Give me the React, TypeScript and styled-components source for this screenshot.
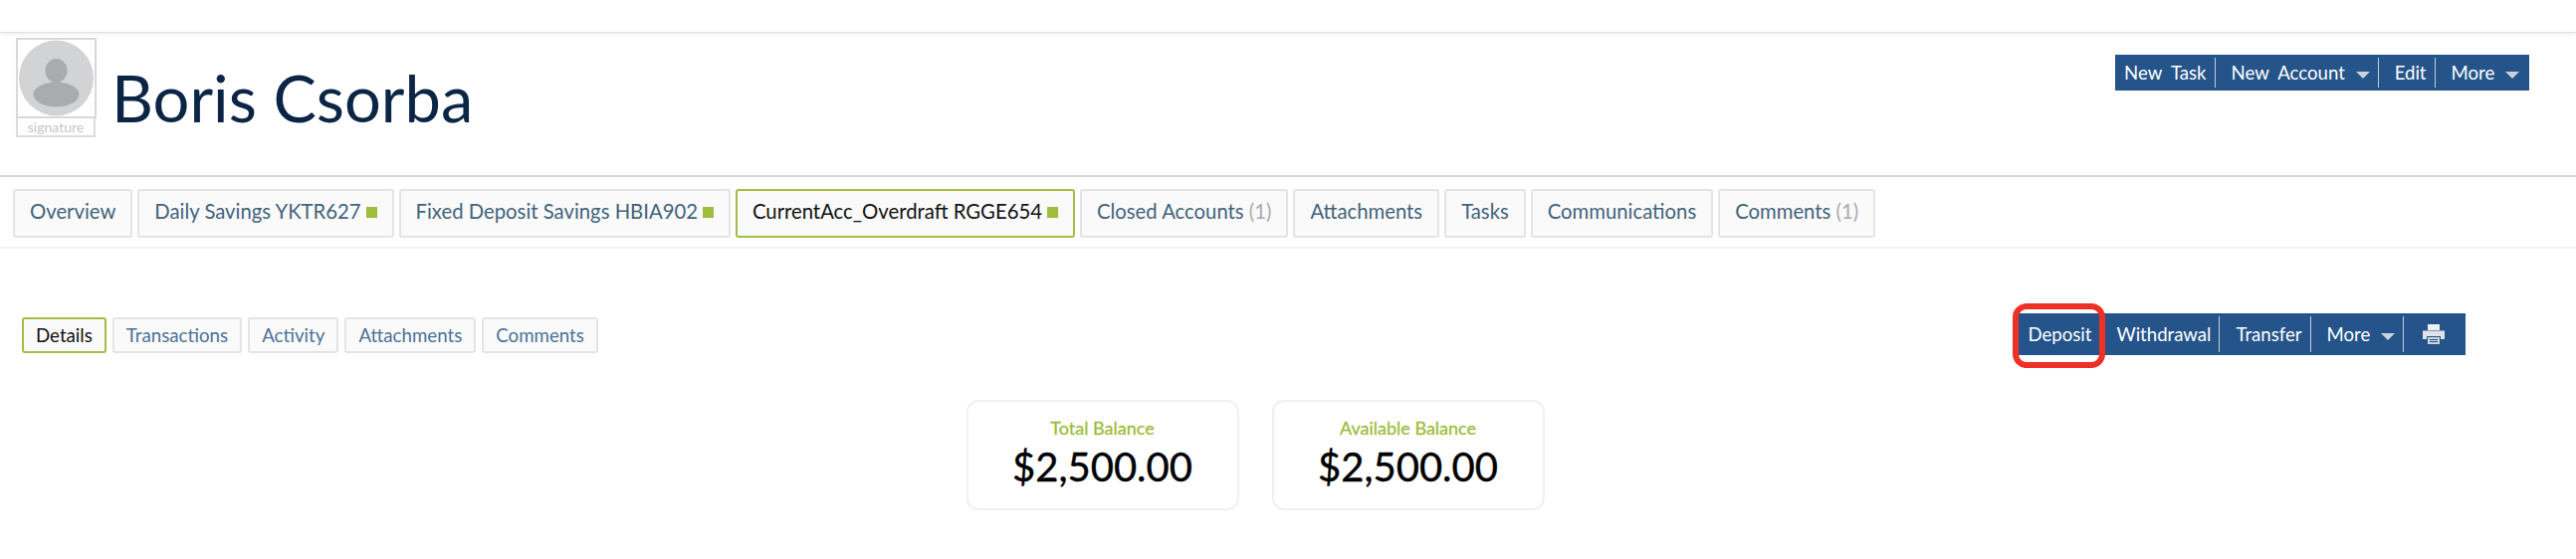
import styled, { createGlobalStyle } from 'styled-components';

const GlobalStyle = createGlobalStyle`
  html, body {
    margin: 0;
    padding: 0;
    background: #fff;
    font-family: Lato, "Liberation Sans", sans-serif;
  }
`;

const mainTabs = [
  { label: 'Overview' },
  { label: 'Daily Savings YKTR627', dot: true },
  { label: 'Fixed Deposit Savings HBIA902', dot: true },
  { label: 'CurrentAcc_Overdraft RGGE654', dot: true, active: true },
  { label: 'Closed Accounts', count: 1 },
  { label: 'Attachments' },
  { label: 'Tasks' },
  { label: 'Communications' },
  { label: 'Comments', count: 1 },
];

const subTabs = ['Details', 'Transactions', 'Activity', 'Attachments', 'Comments'];

function Printer() {
  return (
    <svg width="24" height="22" viewBox="0 0 24 22">
      <path d="M6 1h12v6H6z" fill="#eef1f4" />
      <path d="M1 7.5h22v8.5h-4v-3H5v3H1z" fill="#dfe3e8" />
      <path d="M6 14h12v7H6z" fill="#cdd3d9" />
      <path d="M8 16h8v1H8zM8 18h8v1H8z" fill="#24548a" />
    </svg>
  );
}

function App() {
  return (
    <Page>
      <GlobalStyle />
      <TopStrip />
      <Header>
        <Identity>
          <AvatarColumn>
            <AvatarFrame>
              <svg width="77" height="77" viewBox="0 0 77 77">
                <ellipse cx="38.5" cy="38.5" rx="37.5" ry="38" fill="#d2d3d5" />
                <ellipse cx="38.5" cy="31" rx="11" ry="12" fill="#a9abae" />
                <ellipse cx="38.5" cy="55" rx="23" ry="12.5" fill="#a9abae" />
              </svg>
            </AvatarFrame>
            <Signature>signature</Signature>
          </AvatarColumn>
          <Name>Boris Csorba</Name>
        </Identity>
        <HeaderBar>
          <BarItem $first>New&nbsp; Task</BarItem>
          <BarItem>
            New&nbsp; Account <CaretMark />
          </BarItem>
          <BarItem>Edit</BarItem>
          <BarItem $last>
            More <CaretMark />
          </BarItem>
        </HeaderBar>
      </Header>
      <MainTabRow>
        {mainTabs.map((tab) => (
          <MainTab key={tab.label} $active={tab.active}>
            {tab.label}
            {tab.count ? <Count> ({tab.count})</Count> : null}
            {tab.dot ? <Dot /> : null}
          </MainTab>
        ))}
      </MainTabRow>
      <SubRow>
        <SubTabs>
          {subTabs.map((tab) => (
            <SubTab key={tab} $active={tab === 'Details'}>
              {tab}
            </SubTab>
          ))}
        </SubTabs>
        <ActionBar>
          <BarItem $first>
            Deposit
            <Highlight />
          </BarItem>
          <BarItem>Withdrawal</BarItem>
          <BarItem>Transfer</BarItem>
          <BarItem>
            More <CaretMark />
          </BarItem>
          <PrintItem>
            <Printer />
          </PrintItem>
        </ActionBar>
      </SubRow>
      <Cards>
        <Card>
          <CardLabel>Total Balance</CardLabel>
          <CardValue>$2,500.00</CardValue>
        </Card>
        <Card>
          <CardLabel>Available Balance</CardLabel>
          <CardValue>$2,500.00</CardValue>
        </Card>
      </Cards>
    </Page>
  );
}

const Page = styled.div`
  width: 2588px;
  height: 562px;
  overflow: hidden;
  background: #fff;
`;

const TopStrip = styled.div`
  height: 32px;
  border-bottom: 1px solid #dfe0e0;
  box-shadow: 0 2px 3px rgba(0, 0, 0, 0.06);
`;

const Header = styled.div`
  height: 138px;
  padding: 5px 47px 0 16px;
  display: flex;
  justify-content: space-between;
  align-items: flex-start;
  border-bottom: 2px solid #d6d7d7;
`;

const Identity = styled.div`
  display: flex;
  align-items: flex-start;
  gap: 15px;
`;

const AvatarColumn = styled.div`
  display: flex;
  flex-direction: column;
  width: 81px;
`;

const AvatarFrame = styled.div`
  width: 81px;
  height: 81px;
  box-sizing: border-box;
  border: 2px solid #d9d9d9;
  display: flex;
  svg {
    display: block;
  }
`;

const Signature = styled.div`
  width: 80px;
  height: 19px;
  box-sizing: border-box;
  border: 2px solid #dcdcdc;
  border-top: 0;
  font-size: 14px;
  line-height: 17px;
  text-align: center;
  color: #c6c6c6;
`;

const Name = styled.h1`
  margin: 22px 0 0;
  font-size: 65px;
  line-height: 77px;
  font-weight: 400;
  color: #0b2545;
`;

const HeaderBar = styled.div`
  margin-top: 17px;
  height: 36px;
  display: flex;
  align-items: center;
  background: #24548a;
`;

const ActionBar = styled.div`
  height: 42px;
  display: flex;
  align-items: center;
  background: #24548a;
`;

const BarItem = styled.div<{ $first?: boolean; $last?: boolean }>`
  position: relative;
  display: flex;
  align-items: center;
  height: calc(100% - 6px);
  padding: 0 ${(p) => (p.$last ? '10px' : '8px')} 0 ${(p) => (p.$first ? '9px' : '16px')};
  border-right: ${(p) => (p.$last ? '0' : '1px solid #c5ced8')};
  font-size: 18.6px;
  white-space: pre;
  color: #fff;
`;

const PrintItem = styled.div`
  display: flex;
  align-items: center;
  padding: 0 20px 0 18px;
`;

const CaretMark = styled.span`
  display: inline-block;
  width: 0;
  height: 0;
  margin-left: 6px;
  margin-top: 4px;
  border-left: 7.5px solid transparent;
  border-right: 7.5px solid transparent;
  border-top: 7px solid #cbd2da;
`;

const Highlight = styled.span`
  position: absolute;
  left: -6px;
  right: -6px;
  top: -13px;
  bottom: -16px;
  border: 6px solid #ee3124;
  border-radius: 14px;
`;

const MainTabRow = styled.div`
  display: flex;
  gap: 5px;
  padding: 12px 0 9px 13px;
  border-bottom: 2px solid #f3f5ee;
`;

const MainTab = styled.div<{ $active?: boolean }>`
  height: 49px;
  box-sizing: border-box;
  padding: 0 15px 6px;
  display: flex;
  align-items: center;
  white-space: pre;
  font-size: 20.3px;
  background: #fafafa;
  border: 2px solid ${(p) => (p.$active ? '#a2bf45' : '#e4e4e4')};
  border-radius: 3px;
  color: ${(p) => (p.$active ? '#111' : '#42637b')};
`;

const Count = styled.span`
  color: #a9abad;
`;

const Dot = styled.span`
  width: 11px;
  height: 11px;
  margin-left: 5px;
  margin-top: 4px;
  background: #9fbd3a;
`;

const SubRow = styled.div`
  display: flex;
  justify-content: space-between;
  align-items: center;
  padding: 65px 111px 0 22px;
`;

const SubTabs = styled.div`
  display: flex;
  gap: 6px;
  margin-top: 2px;
`;

const SubTab = styled.div<{ $active?: boolean }>`
  height: 36px;
  box-sizing: border-box;
  padding: 0 12px;
  display: flex;
  align-items: center;
  font-size: 18.7px;
  background: #fafafa;
  border: 2px solid ${(p) => (p.$active ? '#a2bf45' : '#e4e4e4')};
  border-radius: 3px;
  color: ${(p) => (p.$active ? '#111' : '#4c7296')};
`;

const Cards = styled.div`
  display: flex;
  justify-content: center;
  gap: 33px;
  margin-top: 45px;
  padding-right: 66px;
`;

const Card = styled.div`
  width: 274px;
  height: 111px;
  box-sizing: border-box;
  border: 2px solid #f0f0f0;
  border-radius: 12px;
  padding-top: 14px;
  display: flex;
  flex-direction: column;
  align-items: center;
`;

const CardLabel = styled.div`
  font-size: 18px;
  line-height: 24px;
  -webkit-text-stroke: 0.3px #9dbd3a;
  color: #9dbd3a;
`;

const CardValue = styled.div`
  font-size: 40px;
  line-height: 54px;
  -webkit-text-stroke: 0.4px #000;
  color: #000;
`;

export default App;
